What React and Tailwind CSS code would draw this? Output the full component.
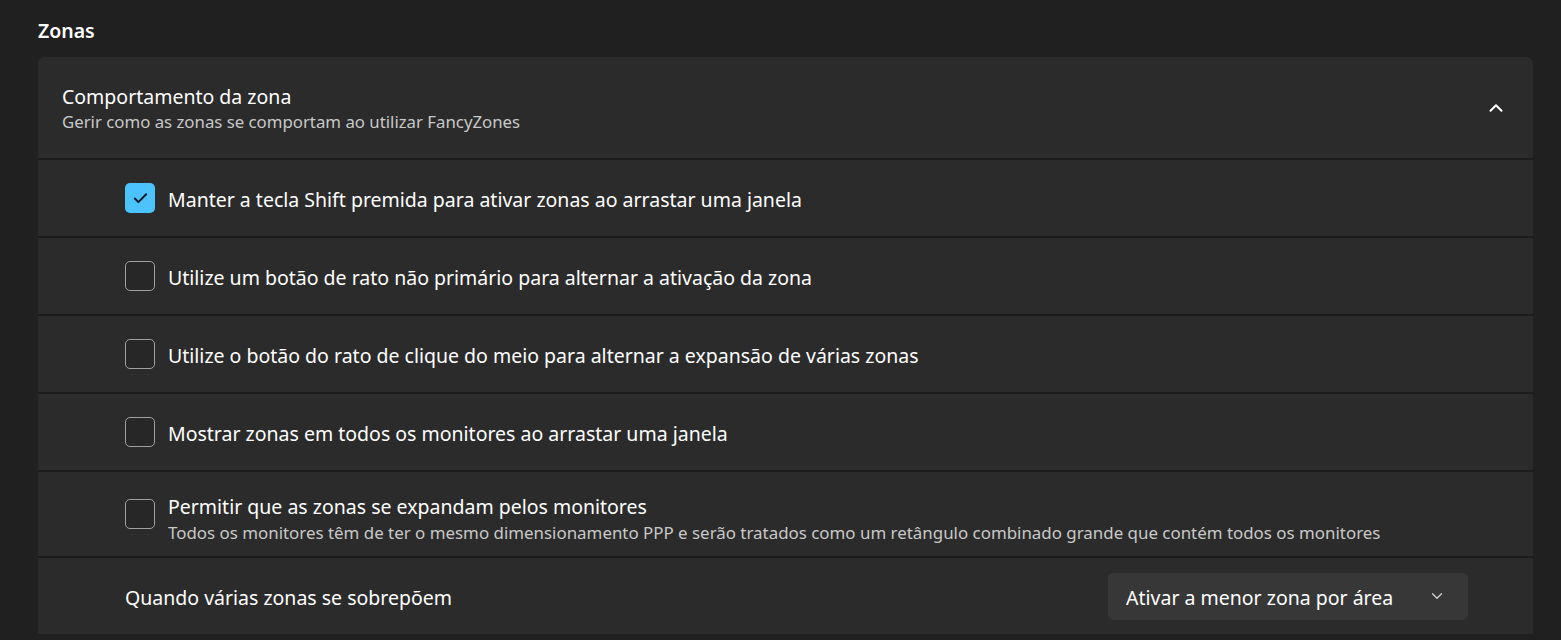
import { ChevronUp, ChevronDown, Check } from 'lucide-react'

const rows = [
  { label: 'Manter a tecla Shift premida para ativar zonas ao arrastar uma janela', checked: true },
  { label: 'Utilize um botão de rato não primário para alternar a ativação da zona' },
  { label: 'Utilize o botão do rato de clique do meio para alternar a expansão de várias zonas' },
  { label: 'Mostrar zonas em todos os monitores ao arrastar uma janela' },
  {
    label: 'Permitir que as zonas se expandam pelos monitores',
    desc: 'Todos os monitores têm de ter o mesmo dimensionamento PPP e serão tratados como um retângulo combinado grande que contém todos os monitores',
  },
]

function Checkbox({ checked }) {
  return checked ? (
    <div className="w-[30px] h-[30px] shrink-0 rounded-[5px] bg-[#4cc2ff] flex items-center justify-center">
      <Check size={17} strokeWidth={2.6} className="text-[#0b1620]" />
    </div>
  ) : (
    <div className="w-[30px] h-[30px] shrink-0 rounded-[5px] border-[1.5px] border-[#a0a0a0] bg-[#272727]" />
  )
}

export default function App() {
  return (
    <div className="min-h-screen h-[640px] overflow-hidden bg-[#202020] text-white font-['Segoe_UI','Noto_Sans',sans-serif]">
      <div className="pl-[38px] pr-[28px]">
        <h2 className="pt-[18px] h-[57px] text-[19.5px] font-semibold leading-[26px]">Zonas</h2>

        <div className="flex flex-col gap-[2px] bg-[#1c1c1c] rounded-t-[6px] overflow-hidden">
          <div className="h-[101px] bg-[#2b2b2b] flex items-center justify-between pl-[24px] pr-[26px]">
            <div className="flex flex-col pt-[3px]">
              <span className="text-[19.5px] leading-[25px] text-[#ffffff]">Comportamento da zona</span>
              <span className="text-[16.8px] leading-[25px] text-[#c8c8c8]">Gerir como as zonas se comportam ao utilizar FancyZones</span>
            </div>
            <ChevronUp size={22} strokeWidth={2.25} className="text-white" />
          </div>

          {rows.map((r, i) => (
            <div
              key={i}
              className={`${r.desc ? 'h-[84px]' : 'h-[76px]'} bg-[#2b2b2b] flex items-center pl-[87px] pr-[26px] gap-[13px]`}
            >
              <Checkbox checked={r.checked} />
              <div className={`flex flex-col ${r.desc ? 'pt-[12px]' : 'pt-[4px]'}`}>
                <span className="text-[19.5px] leading-[26px] text-white">{r.label}</span>
                {r.desc && (
                  <span className="text-[16.9px] leading-[26px] text-[#c8c8c8]">{r.desc}</span>
                )}
              </div>
            </div>
          ))}

          <div className="h-[76px] bg-[#2b2b2b] flex items-center justify-between pl-[87px] pr-[65px]">
            <span className="text-[19.5px] leading-[26px] pt-[4px] text-white">Quando várias zonas se sobrepõem</span>
            <div className="w-[360px] h-[47px] rounded-[5px] bg-[#373737] flex items-center justify-between pl-[18px] pr-[22px]">
              <span className="text-[19.5px] leading-[26px] pt-[3px] text-white">Ativar a menor zona por área</span>
              <ChevronDown size={18} strokeWidth={1.75} className="text-[#cfcfcf]" />
            </div>
          </div>
        </div>
      </div>
    </div>
  )
}
